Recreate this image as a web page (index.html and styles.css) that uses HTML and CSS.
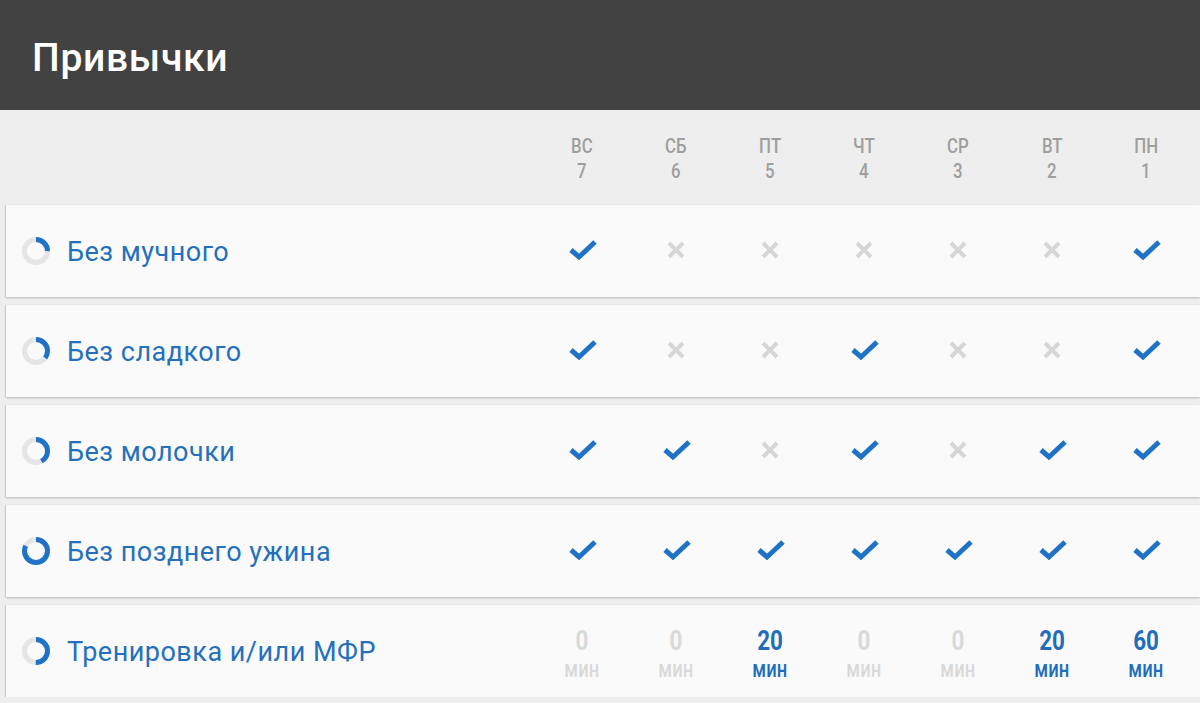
FILE: index.html
```html
<!DOCTYPE html>
<html lang="ru">
<head>
<meta charset="utf-8">
<title>Привычки</title>
<link rel="stylesheet" href="styles.css">
</head>
<body>
<header class="appbar"><h1 class="title">Привычки</h1></header>

<div class="days">
  <div class="spacer"></div>
  <div class="day"><span class="cond">ВС</span><span class="cond">7</span></div>
  <div class="day"><span class="cond">СБ</span><span class="cond">6</span></div>
  <div class="day"><span class="cond">ПТ</span><span class="cond">5</span></div>
  <div class="day"><span class="cond">ЧТ</span><span class="cond">4</span></div>
  <div class="day"><span class="cond">СР</span><span class="cond">3</span></div>
  <div class="day"><span class="cond">ВТ</span><span class="cond">2</span></div>
  <div class="day"><span class="cond">ПН</span><span class="cond">1</span></div>
</div>

<main class="list">
  <section class="card">
    <div class="habit">
      <svg class="ring" viewBox="0 0 28 28"><circle class="track" cx="14" cy="14" r="11.5"/><circle class="bar" cx="14" cy="14" r="11.5" style="stroke-dasharray:18.1 100"/></svg>
      <span class="name">Без мучного</span>
    </div>
    <div class="cell"><svg class="ok" viewBox="0 0 30 24"><polyline points="4,12 12,19 28,4"/></svg></div>
    <div class="cell"><svg class="no" viewBox="0 0 18 18"><path d="M2 2L16 16M16 2L2 16"/></svg></div>
    <div class="cell"><svg class="no" viewBox="0 0 18 18"><path d="M2 2L16 16M16 2L2 16"/></svg></div>
    <div class="cell"><svg class="no" viewBox="0 0 18 18"><path d="M2 2L16 16M16 2L2 16"/></svg></div>
    <div class="cell"><svg class="no" viewBox="0 0 18 18"><path d="M2 2L16 16M16 2L2 16"/></svg></div>
    <div class="cell"><svg class="no" viewBox="0 0 18 18"><path d="M2 2L16 16M16 2L2 16"/></svg></div>
    <div class="cell"><svg class="ok" viewBox="0 0 30 24"><polyline points="4,12 12,19 28,4"/></svg></div>
  </section>

  <section class="card">
    <div class="habit">
      <svg class="ring" viewBox="0 0 28 28"><circle class="track" cx="14" cy="14" r="11.5"/><circle class="bar" cx="14" cy="14" r="11.5" style="stroke-dasharray:25.3 100"/></svg>
      <span class="name">Без сладкого</span>
    </div>
    <div class="cell"><svg class="ok" viewBox="0 0 30 24"><polyline points="4,12 12,19 28,4"/></svg></div>
    <div class="cell"><svg class="no" viewBox="0 0 18 18"><path d="M2 2L16 16M16 2L2 16"/></svg></div>
    <div class="cell"><svg class="no" viewBox="0 0 18 18"><path d="M2 2L16 16M16 2L2 16"/></svg></div>
    <div class="cell"><svg class="ok" viewBox="0 0 30 24"><polyline points="4,12 12,19 28,4"/></svg></div>
    <div class="cell"><svg class="no" viewBox="0 0 18 18"><path d="M2 2L16 16M16 2L2 16"/></svg></div>
    <div class="cell"><svg class="no" viewBox="0 0 18 18"><path d="M2 2L16 16M16 2L2 16"/></svg></div>
    <div class="cell"><svg class="ok" viewBox="0 0 30 24"><polyline points="4,12 12,19 28,4"/></svg></div>
  </section>

  <section class="card">
    <div class="habit">
      <svg class="ring" viewBox="0 0 28 28"><circle class="track" cx="14" cy="14" r="11.5"/><circle class="bar" cx="14" cy="14" r="11.5" style="stroke-dasharray:30.3 100"/></svg>
      <span class="name">Без молочки</span>
    </div>
    <div class="cell"><svg class="ok" viewBox="0 0 30 24"><polyline points="4,12 12,19 28,4"/></svg></div>
    <div class="cell"><svg class="ok" viewBox="0 0 30 24"><polyline points="4,12 12,19 28,4"/></svg></div>
    <div class="cell"><svg class="no" viewBox="0 0 18 18"><path d="M2 2L16 16M16 2L2 16"/></svg></div>
    <div class="cell"><svg class="ok" viewBox="0 0 30 24"><polyline points="4,12 12,19 28,4"/></svg></div>
    <div class="cell"><svg class="no" viewBox="0 0 18 18"><path d="M2 2L16 16M16 2L2 16"/></svg></div>
    <div class="cell"><svg class="ok" viewBox="0 0 30 24"><polyline points="4,12 12,19 28,4"/></svg></div>
    <div class="cell"><svg class="ok" viewBox="0 0 30 24"><polyline points="4,12 12,19 28,4"/></svg></div>
  </section>

  <section class="card">
    <div class="habit">
      <svg class="ring" viewBox="0 0 28 28"><circle class="track" cx="14" cy="14" r="11.5"/><circle class="bar" cx="14" cy="14" r="11.5" style="stroke-dasharray:59.2 100"/></svg>
      <span class="name">Без позднего ужина</span>
    </div>
    <div class="cell"><svg class="ok" viewBox="0 0 30 24"><polyline points="4,12 12,19 28,4"/></svg></div>
    <div class="cell"><svg class="ok" viewBox="0 0 30 24"><polyline points="4,12 12,19 28,4"/></svg></div>
    <div class="cell"><svg class="ok" viewBox="0 0 30 24"><polyline points="4,12 12,19 28,4"/></svg></div>
    <div class="cell"><svg class="ok" viewBox="0 0 30 24"><polyline points="4,12 12,19 28,4"/></svg></div>
    <div class="cell"><svg class="ok" viewBox="0 0 30 24"><polyline points="4,12 12,19 28,4"/></svg></div>
    <div class="cell"><svg class="ok" viewBox="0 0 30 24"><polyline points="4,12 12,19 28,4"/></svg></div>
    <div class="cell"><svg class="ok" viewBox="0 0 30 24"><polyline points="4,12 12,19 28,4"/></svg></div>
  </section>

  <section class="card">
    <div class="habit">
      <svg class="ring" viewBox="0 0 28 28"><circle class="track" cx="14" cy="14" r="11.5"/><circle class="bar" cx="14" cy="14" r="11.5" style="stroke-dasharray:36.1 100"/></svg>
      <span class="name">Тренировка и/или МФР</span>
    </div>
    <div class="cell num zero"><span class="cond val">0</span><span class="cond unit">мин</span></div>
    <div class="cell num zero"><span class="cond val">0</span><span class="cond unit">мин</span></div>
    <div class="cell num"><span class="cond val">20</span><span class="cond unit">мин</span></div>
    <div class="cell num zero"><span class="cond val">0</span><span class="cond unit">мин</span></div>
    <div class="cell num zero"><span class="cond val">0</span><span class="cond unit">мин</span></div>
    <div class="cell num"><span class="cond val">20</span><span class="cond unit">мин</span></div>
    <div class="cell num"><span class="cond val">60</span><span class="cond unit">мин</span></div>
  </section>
</main>
</body>
</html>
```

FILE: styles.css
```css
* { box-sizing: border-box; }

html, body {
  margin: 0;
  padding: 0;
  background: #eeeeee;
  font-family: Roboto, "Noto Sans", "Liberation Sans", sans-serif;
  overflow: hidden;
}

.appbar {
  height: 110px;
  background: #424242;
  display: flex;
  align-items: center;
  padding-left: 32px;
  padding-top: 6px;
}

.title {
  margin: 0;
  color: #ffffff;
  font-size: 39px;
  font-weight: 500;
  letter-spacing: 0.7px;
  line-height: 1;
}

.cond {
  display: inline-block;
  transform: scaleX(0.84);
}

.days {
  height: 95px;
  display: grid;
  grid-template-columns: 1fr repeat(7, 94px);
  margin-left: 6px;
  padding-right: 7px;
  align-items: center;
}

.day {
  display: flex;
  flex-direction: column;
  align-items: center;
  color: #9e9e9e;
  font-size: 20px;
  font-weight: 500;
  line-height: 25px;
  padding-top: 2px;
}

.list {
  display: flex;
  flex-direction: column;
  gap: 8px;
}

.card {
  height: 92px;
  margin-left: 6px;
  padding-right: 7px;
  background: #fafafa;
  box-shadow: 0 1px 2px rgba(0, 0, 0, 0.22), -1px 0 1px rgba(0, 0, 0, 0.08);
  display: grid;
  grid-template-columns: 1fr repeat(7, 94px);
  align-items: center;
}

.habit {
  display: flex;
  align-items: center;
  padding-left: 16px;
  gap: 17px;
}

.ring {
  width: 28px;
  height: 28px;
  transform: rotate(-90deg);
  flex: none;
}

.ring circle {
  fill: none;
  stroke-width: 5;
}

.ring .track { stroke: #e5e5e5; }
.ring .bar { stroke: #1f72c6; }

.name {
  color: #2470bd;
  font-size: 27px;
  font-weight: 400;
  letter-spacing: 0.5px;
  margin-top: 2px;
}

.cell {
  display: flex;
  justify-content: center;
  align-items: center;
}

.ok {
  width: 30px;
  height: 24px;
  margin-top: -2px;
}

.ok polyline {
  fill: none;
  stroke: #1f72c6;
  stroke-width: 5;
  stroke-linejoin: miter;
}

.no {
  width: 18px;
  height: 18px;
  margin-top: -2px;
}

.no path {
  stroke: #d6d6d6;
  stroke-width: 4;
  fill: none;
}

.num {
  flex-direction: column;
  color: #1f6dbb;
  font-weight: 700;
  padding-top: 9px;
}

.num .val {
  font-size: 28px;
  line-height: 28px;
  transform: scaleX(0.8);
}

.num .unit {
  font-size: 23px;
  font-weight: 500;
  line-height: 29px;
  transform: scaleX(0.8);
}

.num.zero { color: #d9d9d9; }
```
